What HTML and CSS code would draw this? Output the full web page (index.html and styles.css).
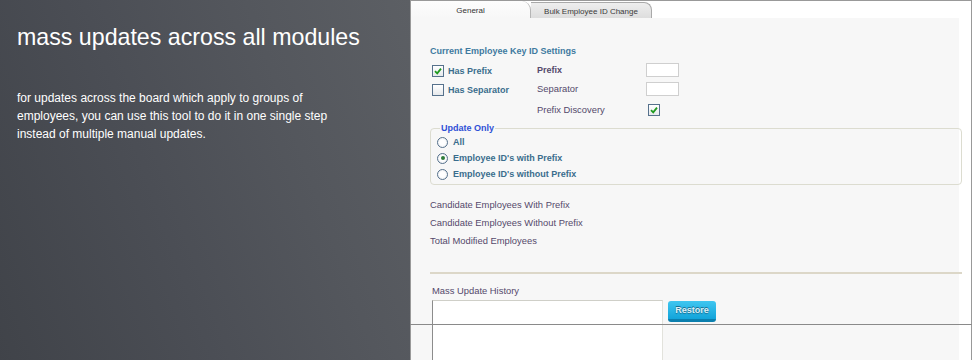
FILE: index.html
```html
<!DOCTYPE html>
<html lang="en">
<head>
<meta charset="utf-8">
<title>Mass updates</title>
<link rel="stylesheet" href="styles.css">
</head>
<body>
<div class="page">
  <section class="intro">
    <h1>mass updates across all modules</h1>
    <p>for updates across the board which apply to groups of employees, you can use this tool to do it in one single step instead of multiple manual updates.</p>
  </section>
  <section class="app">
    <div class="tabs">
      <div class="tab tab-general">General</div>
      <div class="tab tab-bulk">Bulk Employee ID Change</div>
    </div>
    <div class="content">
      <h2 class="section-title">Current Employee Key ID Settings</h2>
      <div class="settings">
        <div class="check-label"><span class="cb checked"><svg viewBox="0 0 10 10" width="10" height="10"><path d="M2 5.2 L4.2 7.3 L8 2.6" fill="none" stroke="#1f9a1f" stroke-width="1.8"/></svg></span><span class="strong-label">Has Prefix</span></div>
        <div class="field-label bold">Prefix</div>
        <div class="txt"></div>
        <div class="check-label"><span class="cb"></span><span class="strong-label">Has Separator</span></div>
        <div class="field-label">Separator</div>
        <div class="txt"></div>
        <div></div>
        <div class="field-label">Prefix Discovery</div>
        <div class="cb-cell"><span class="cb checked"><svg viewBox="0 0 10 10" width="10" height="10"><path d="M2 5.2 L4.2 7.3 L8 2.6" fill="none" stroke="#1f9a1f" stroke-width="1.8"/></svg></span></div>
      </div>
      <fieldset class="update">
        <legend>Update Only</legend>
        <div class="radio-row"><span class="radio"></span><span class="strong-label">All</span></div>
        <div class="radio-row"><span class="radio on"></span><span class="strong-label">Employee ID's with Prefix</span></div>
        <div class="radio-row"><span class="radio"></span><span class="strong-label">Employee ID's without Prefix</span></div>
      </fieldset>
      <div class="stats">
        <div>Candidate Employees With Prefix</div>
        <div>Candidate Employees Without Prefix</div>
        <div>Total Modified Employees</div>
      </div>
      <div class="divider"></div>
      <div class="history-label">Mass Update History</div>
      <div class="history-row">
        <div class="history-box"></div>
        <div class="restore">Restore</div>
      </div>
    </div>
  </section>
</div>
</body>
</html>
```
FILE: styles.css
```css
* { box-sizing: border-box; }
html, body { margin: 0; height: 360px; overflow: hidden; }
body { font-family: "Liberation Sans", Arial, sans-serif; background: #fff; }

.page { display: grid; grid-template-columns: 410px 562px; height: 360px; }

.intro {
  background: linear-gradient(70deg, #404349 0%, #4b4e55 40%, #54575d 70%, #5c5f64 100%);
  color: #fff;
  padding: 24px 0 0 17px;
}
.intro h1 { margin: 0; font-size: 23.2px; font-weight: normal; line-height: 26px; }
.intro p { margin: 39px 0 0; font-size: 12px; line-height: 18px; width: 330px; }

.app {
  position: relative;
  background: #fff;
  border: 1px solid #999;
  border-bottom: 0;
  padding-right: 12px;
  display: flex;
  flex-direction: column;
}
.app::after {
  content: "";
  position: absolute;
  left: -1px; right: -1px; top: 323px;
  height: 1px;
  background: #8a8a8a;
}

.tabs { display: flex; height: 17px; align-items: flex-end; }
.tab { font-size: 8px; color: #333; display: flex; align-items: center; justify-content: center; padding-top: 1px; }
.tab-general {
  width: 120px; height: 17px;
  background: linear-gradient(#fdfdfd, #f7f7f7);
  border-right: 1px solid #b5b5b5;
  border-top-right-radius: 9px;
}
.tab-bulk {
  width: 121px; height: 16px;
  background: linear-gradient(#eeeeee, #dddddd);
  border: 1px solid #a9a9a9;
  border-left: 0; border-bottom: 0;
  border-top-right-radius: 8px;
  color: #3a3a3a;
}

.content { flex: 1; background: #f7f7f7; padding: 27px 0 0 19px; font-size: 9.4px; }

.section-title { margin: 0; font-size: 9px; line-height: 12px; font-weight: bold; color: #3f7aa0; }

.settings {
  display: grid;
  grid-template-columns: 107px 109px 33px;
  grid-template-rows: 14px 14px 18px;
  row-gap: 5px;
  margin-top: 6px;
  align-items: center;
}
.check-label { display: flex; align-items: center; gap: 4px; padding-left: 2px; padding-top: 2px; }
.strong-label { font-weight: bold; font-size: 9px; color: #3a6d8d; line-height: 12px; }
.field-label { color: #54496b; line-height: 12px; }
.field-label.bold { font-weight: bold; font-size: 9px; }
.txt { width: 33px; height: 14px; background: #fff; border: 1px solid #cfcfcf; }
.cb-cell { padding-left: 2px; display: flex; }

.cb {
  width: 12px; height: 12px;
  border: 1px solid #56718c;
  background: linear-gradient(#ffffff, #e6e9ec);
  display: inline-flex; align-items: center; justify-content: center;
  flex: none;
}

.update {
  margin: 4px -3px 0 0;
  border: 1px solid #dcdcd0;
  border-radius: 4px;
  padding: 0 6px 2px;
}
.update legend {
  padding: 0 1px;
  margin-left: 3px;
  font-size: 9px;
  line-height: 11px;
  font-weight: bold;
  color: #2f50d6;
}
.radio-row { height: 16px; display: flex; align-items: center; gap: 5px; }
.radio {
  width: 11px; height: 11px; border-radius: 50%;
  border: 1px solid #56718c;
  background: radial-gradient(circle, #ffffff 40%, #e2e6ea 100%);
  display: inline-flex; align-items: center; justify-content: center;
  flex: none;
}
.radio.on::before {
  content: "";
  width: 4px; height: 4px; border-radius: 50%;
  background: #2f7d3a;
}

.stats { margin-top: 11px; line-height: 18px; color: #55496b; }

.divider { margin: 22px -3px 0 0; height: 2px; background: #dcd7c8; }

.history-label { margin-top: 11px; padding-left: 2px; line-height: 12px; color: #54496b; }
.history-row { display: flex; gap: 5px; margin-top: 3px; padding-left: 2px; }
.history-box {
  width: 231px; height: 70px;
  background: #fff;
  border: 1px solid #e2e2dc;
  border-top-color: #cfcfc8;
  border-left-color: #8c8c8c;
}
.restore {
  margin-top: 1px;
  width: 48px; height: 21px;
  border-radius: 3px;
  background: linear-gradient(#3fc6f0, #12a4da);
  border-bottom: 3px solid #0b7fae;
  color: #dfeff6;
  font-weight: bold;
  font-size: 9px;
  text-shadow: 0 -1px 0 #1a6f92, 0 1px 1px #1a6f92;
  display: flex; align-items: center; justify-content: center;
}
```
